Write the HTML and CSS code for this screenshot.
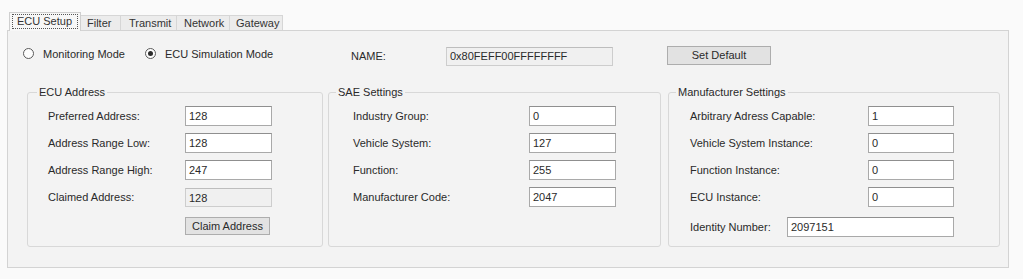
FILE: index.html
```html
<!DOCTYPE html>
<html>
<head>
<meta charset="utf-8">
<title>ECU Setup</title>
<link rel="stylesheet" href="styles.css">
</head>
<body>
<div class="window">
  <div class="tabs">
    <div class="tab active"><span class="focus">ECU Setup</span></div>
    <div class="tab tab-filter">Filter</div>
    <div class="tab tab-transmit">Transmit</div>
    <div class="tab tab-network">Network</div>
    <div class="tab tab-gateway">Gateway</div>
  </div>
  <div class="page">
    <div class="top-row">
      <label class="radio radio-monitor"><span class="dot"></span>Monitoring Mode</label>
      <label class="radio radio-sim checked"><span class="dot"></span>ECU Simulation Mode</label>
      <span class="name-label">NAME:</span>
      <div class="field readonly name-field">0x80FEFF00FFFFFFFF</div>
      <div class="btn set-default">Set Default</div>
    </div>
    <div class="groups">
      <fieldset class="group g-ecu">
        <legend>ECU Address</legend>
        <div class="grid">
          <span class="lbl">Preferred Address:</span><div class="field">128</div>
          <span class="lbl">Address Range Low:</span><div class="field">128</div>
          <span class="lbl">Address Range High:</span><div class="field">247</div>
          <span class="lbl">Claimed Address:</span><div class="field readonly claimed">128</div>
          <span class="lbl"></span><div class="btn claim">Claim Address</div>
        </div>
      </fieldset>
      <fieldset class="group g-sae">
        <legend>SAE Settings</legend>
        <div class="grid">
          <span class="lbl">Industry Group:</span><div class="field">0</div>
          <span class="lbl">Vehicle System:</span><div class="field">127</div>
          <span class="lbl">Function:</span><div class="field">255</div>
          <span class="lbl">Manufacturer Code:</span><div class="field">2047</div>
        </div>
      </fieldset>
      <fieldset class="group g-man">
        <legend>Manufacturer Settings</legend>
        <div class="grid">
          <span class="lbl">Arbitrary Adress Capable:</span><div class="field">1</div>
          <span class="lbl">Vehicle System Instance:</span><div class="field">0</div>
          <span class="lbl">Function Instance:</span><div class="field">0</div>
          <span class="lbl">ECU Instance:</span><div class="field">0</div>
        </div>
        <div class="identity">
          <span class="lbl">Identity Number:</span><div class="field id-field">2097151</div>
        </div>
      </fieldset>
    </div>
  </div>
</div>
</body>
</html>
```
FILE: styles.css
```css
* { box-sizing: border-box; }

body {
  margin: 0;
  background: #fafafa;
  font-family: "Liberation Sans", Arial, sans-serif;
  font-size: 11px;
  color: #2a2a2a;
}

.window {
  padding: 12px 0 0 7px;
  width: 1009px;
}

/* ---------- tabs ---------- */
.tabs {
  display: flex;
  align-items: flex-end;
  height: 18px;
  padding-left: 2px;
}

.tab {
  height: 15px;
  line-height: 14px;
  padding: 0 6px;
  border: 1px solid #d6d6d6;
  border-bottom: none;
  background: #ececec;
  margin-left: -1px;
  color: #333;
  white-space: nowrap;
}

.tab-filter { width: 41px; padding-left: 6px; }
.tab-transmit { width: 57px; padding-left: 8px; }
.tab-network { width: 54px; padding-left: 7px; }
.tab-gateway { width: 54px; padding-left: 6px; }

.tab.active {
  position: relative;
  z-index: 1;
  height: 19px;
  margin-bottom: -1px;
  margin-left: 0;
  padding: 1px 2px 0 2px;
  background: #f7f7f7;
  border-color: #cfcfcf;
}

.focus {
  display: block;
  height: 15px;
  line-height: 13px;
  padding: 0 4px;
  border: 1px dotted #555;
  width: 66px;
  white-space: nowrap;
}

/* ---------- page ---------- */
.page {
  width: 1002px;
  height: 238px;
  border: 1px solid #d3d3d3;
  background: #f3f3f3;
  padding: 15px 0 0 0;
}

.top-row {
  display: flex;
  align-items: center;
  height: 19px;
  padding-left: 15px;
}

.radio {
  display: flex;
  align-items: center;
  margin-top: -4px;
}

.radio-monitor { width: 122px; }
.radio-sim { width: 206px; }

.dot {
  width: 11px;
  height: 11px;
  border: 1px solid #5a5a5a;
  border-radius: 50%;
  background: #fdfdfd;
  margin-right: 9px;
  display: flex;
  align-items: center;
  justify-content: center;
}

.checked .dot::after {
  content: "";
  width: 5px;
  height: 5px;
  border-radius: 50%;
  background: #2c2c2c;
}

.name-label { width: 95px; }

.field {
  height: 20px;
  line-height: 18px;
  padding-left: 3px;
  background: #ffffff;
  border: 1px solid #a9a9a9;
  border-top-color: #8f8f8f;
  color: #2a2a2a;
}

.field.readonly {
  background: #f0f0f0;
  border-color: #cdcdcd;
  border-top-color: #bdbdbd;
}

.name-field {
  width: 167px;
  height: 19px;
  line-height: 17px;
  margin-top: 1px;
}

.btn {
  height: 19px;
  line-height: 17px;
  text-align: center;
  background: #e2e2e2;
  border: 1px solid #adadad;
  color: #2a2a2a;
}

.set-default {
  width: 104px;
  margin-left: 54px;
}

/* ---------- groups ---------- */
.groups {
  display: flex;
  margin-top: 21px;
  padding-left: 19px;
  height: 161px;
}

.group {
  margin: 0;
  padding: 0;
  border: 1px solid #d8d8d8;
  border-radius: 3px;
  min-width: 0;
}

.group legend {
  padding: 0 2px;
  margin-left: 7px;
  line-height: 13px;
  color: #2a2a2a;
}

.g-ecu { width: 296px; }
.g-ecu legend { margin-left: 9px; }
.g-sae { width: 333px; margin-left: 5px; }
.g-man { width: 332px; margin-left: 7px; }

.grid {
  display: grid;
  grid-auto-rows: 20px;
  row-gap: 7px;
  align-items: center;
  margin-top: 7px;
}

.g-ecu .grid { grid-template-columns: 137px 87px; padding-left: 20px; }
.g-sae .grid { grid-template-columns: 176px 87px; padding-left: 24px; }
.g-man .grid { grid-template-columns: 178px 86px; padding-left: 21px; }

.claimed { height: 19px; }

.claim {
  width: 85px;
  margin-top: 4px;
  height: 18px;
  line-height: 16px;
}

.identity {
  display: flex;
  align-items: center;
  margin-top: 10px;
  padding-left: 21px;
}

.identity .lbl { width: 97px; }
.id-field { width: 167px; height: 20px; }
```
